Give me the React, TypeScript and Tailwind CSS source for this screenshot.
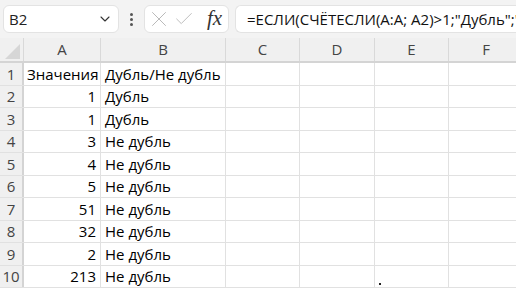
import { ChevronDown, X, Check } from "lucide-react";

const cols = [
  { name: "A", w: "w-[77px]" },
  { name: "B", w: "w-[125px]" },
  { name: "C", w: "w-[74px]" },
  { name: "D", w: "w-[75px]" },
  { name: "E", w: "w-[74px]" },
  { name: "F", w: "w-[75px]" },
];

const rows: [string, string][] = [
  ["Значения", "Дубль/Не дубль"],
  ["1", "Дубль"],
  ["1", "Дубль"],
  ["3", "Не дубль"],
  ["4", "Не дубль"],
  ["5", "Не дубль"],
  ["51", "Не дубль"],
  ["32", "Не дубль"],
  ["2", "Не дубль"],
  ["213", "Не дубль"],
];

export default function App() {
  return (
    <div className="w-[516px] h-[290px] overflow-hidden bg-white text-[15px] text-black font-['Open_Sans',sans-serif]">
      {/* formula bar */}
      <div className="h-[38px] bg-[#f3f3f3] flex items-start pt-[5px] pl-[3px]">
        <div className="w-[116px] h-[28px] bg-white border border-[#e3e3e3] rounded-[6px] flex items-center justify-between pl-[5px] pr-[5px]">
          <span className="text-[#222]">B2</span>
          <ChevronDown size={16} strokeWidth={1.6} className="text-[#333]" />
        </div>
        <div className="w-[25px] h-[28px] flex items-center justify-center">
          <div className="flex flex-col gap-[2px]">
            <span className="w-[3px] h-[3px] bg-[#555] rounded-full" />
            <span className="w-[3px] h-[3px] bg-[#555] rounded-full" />
            <span className="w-[3px] h-[3px] bg-[#555] rounded-full" />
          </div>
        </div>
        <div className="w-[85px] h-[28px] bg-white border border-[#e3e3e3] rounded-[6px] flex items-center pl-[1px] gap-0">
          <X size={26} strokeWidth={0.9} className="text-[#b8b8b8]" />
          <Check size={22} strokeWidth={1.0} className="text-[#b8b8b8] ml-[1px]" />
          <span className="font-['Liberation_Serif',serif] italic text-[21px] text-[#333] leading-none ml-[12px] -mt-[2px]">fx</span>
        </div>
        <div className="ml-[6px] flex-1 h-[28px] bg-white border border-[#e3e3e3] rounded-l-[6px] border-r-0 flex items-center pl-[11px] whitespace-nowrap overflow-hidden text-[#111]">
          =ЕСЛИ(СЧЁТЕСЛИ(A:A; A2)&gt;1;"Дубль";"Не дубль")
        </div>
      </div>

      {/* column headers */}
      <div className="flex h-[25px] bg-[#f0f0f0] border-b-2 border-[#d4d4d4] text-[#444]">
        <div className="w-[24px] shrink-0 border-r border-[#d9d9d9] flex items-end justify-end pr-[3px] pb-[2px]">
          <svg width="15" height="15" viewBox="0 0 15 15">
            <polygon points="15,0 15,15 0,15" fill="#d6d6d6" />
          </svg>
        </div>
        {cols.map((c) => (
          <div key={c.name} className={`${c.w} shrink-0 border-r border-[#d9d9d9] flex items-center justify-center`}>
            {c.name}
          </div>
        ))}
      </div>

      {/* rows */}
      {rows.map((r, i) => (
        <div key={i} className="flex h-[22.5px] border-b border-[#e1e1e1]">
          <div className="w-[24px] shrink-0 bg-[#f0f0f0] border-r-2 border-[#d4d4d4] flex items-center justify-center text-[#444]">
            {i + 1}
          </div>
          <div className={`w-[77px] shrink-0 border-r border-[#e1e1e1] flex items-center px-[4px] whitespace-nowrap ${i === 0 ? "justify-start pl-[3px]" : "justify-end"}`}>
            {r[0]}
          </div>
          <div className="w-[125px] shrink-0 border-r border-[#e1e1e1] flex items-center pl-[4px] whitespace-nowrap">
            {r[1]}
          </div>
          <div className="w-[74px] shrink-0 border-r border-[#e1e1e1]" />
          <div className="w-[75px] shrink-0 border-r border-[#e1e1e1]" />
          <div className="w-[74px] shrink-0 border-r border-[#e1e1e1] flex items-end pl-[4px] pb-[2px]">
            {i === 9 && <span className="w-[2px] h-[2px] bg-[#222]" />}
          </div>
          <div className="w-[75px] shrink-0 border-r border-[#e1e1e1]" />
        </div>
      ))}
    </div>
  );
}
